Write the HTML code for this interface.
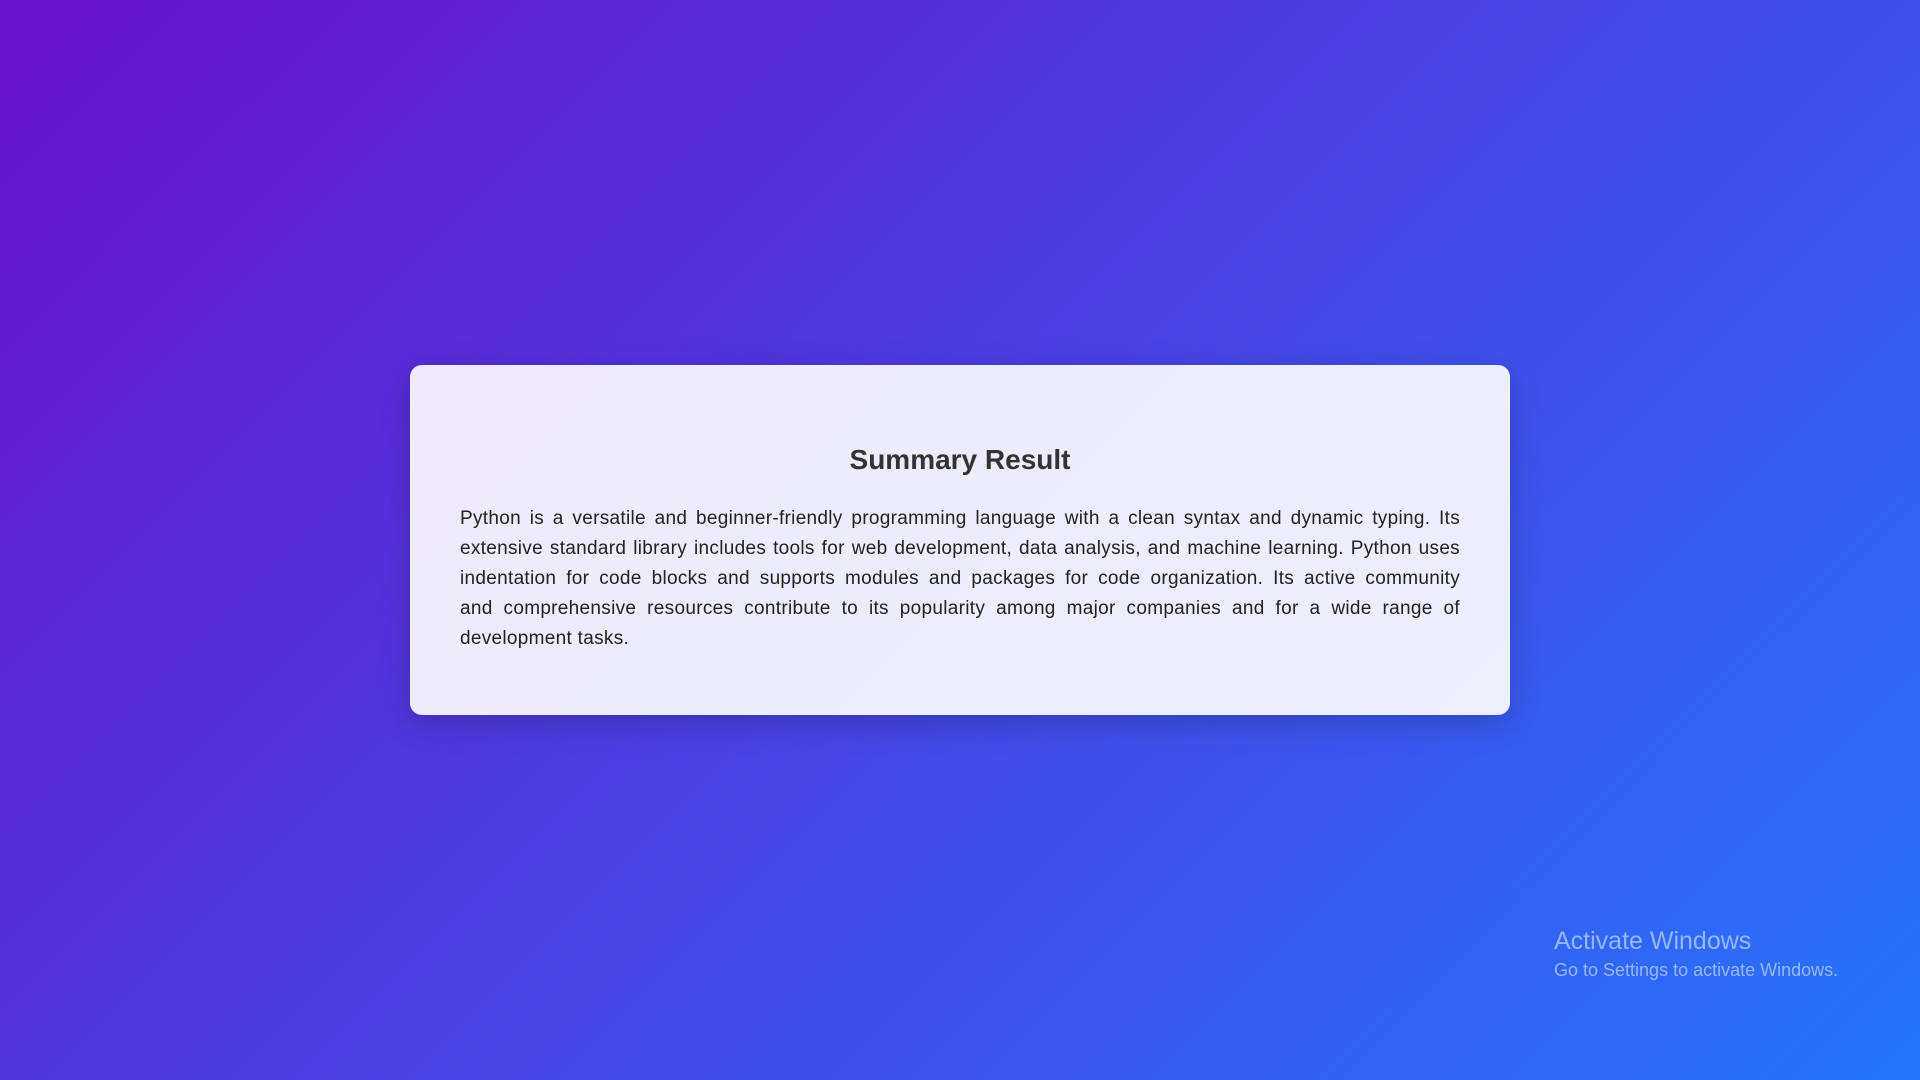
<!DOCTYPE html>
<html><head><meta charset="utf-8"><style>
html,body{margin:0;padding:0;width:1920px;height:1080px;overflow:hidden}
body{background:linear-gradient(135deg,#6a11cb 0%,#2575fc 100%);font-family:"Liberation Sans",sans-serif;position:relative}
.card{position:absolute;left:410px;top:365px;width:1100px;height:350px;box-sizing:border-box;background:rgba(255,255,255,0.9);border-radius:12px;box-shadow:0 8px 32px rgba(0,0,0,0.2);padding:79px 50px 0 50px}
h2{margin:0 0 28px;text-align:center;font-size:28px;font-weight:bold;color:#333}
.p{font-size:19px;letter-spacing:0.3px;line-height:30px;color:#222}
.p div{text-align:justify;text-align-last:justify;white-space:nowrap}
.p div.l{text-align-last:left}
.win{position:absolute;left:1554px;top:927px;color:rgba(255,255,255,0.5);font-family:"Liberation Sans",sans-serif}
.win .a{font-size:25px}
.win .b{font-size:18px;margin-top:4px}
</style></head><body>
<div class="card">
<h2>Summary Result</h2>
<div class="p">
<div>Python is a versatile and beginner-friendly programming language with a clean syntax and dynamic typing. Its</div>
<div>extensive standard library includes tools for web development, data analysis, and machine learning. Python uses</div>
<div>indentation for code blocks and supports modules and packages for code organization. Its active community</div>
<div>and comprehensive resources contribute to its popularity among major companies and for a wide range of</div>
<div class="l">development tasks.</div>
</div>
</div>
<div class="win"><div class="a">Activate Windows</div><div class="b">Go to Settings to activate Windows.</div></div>
</body></html>
